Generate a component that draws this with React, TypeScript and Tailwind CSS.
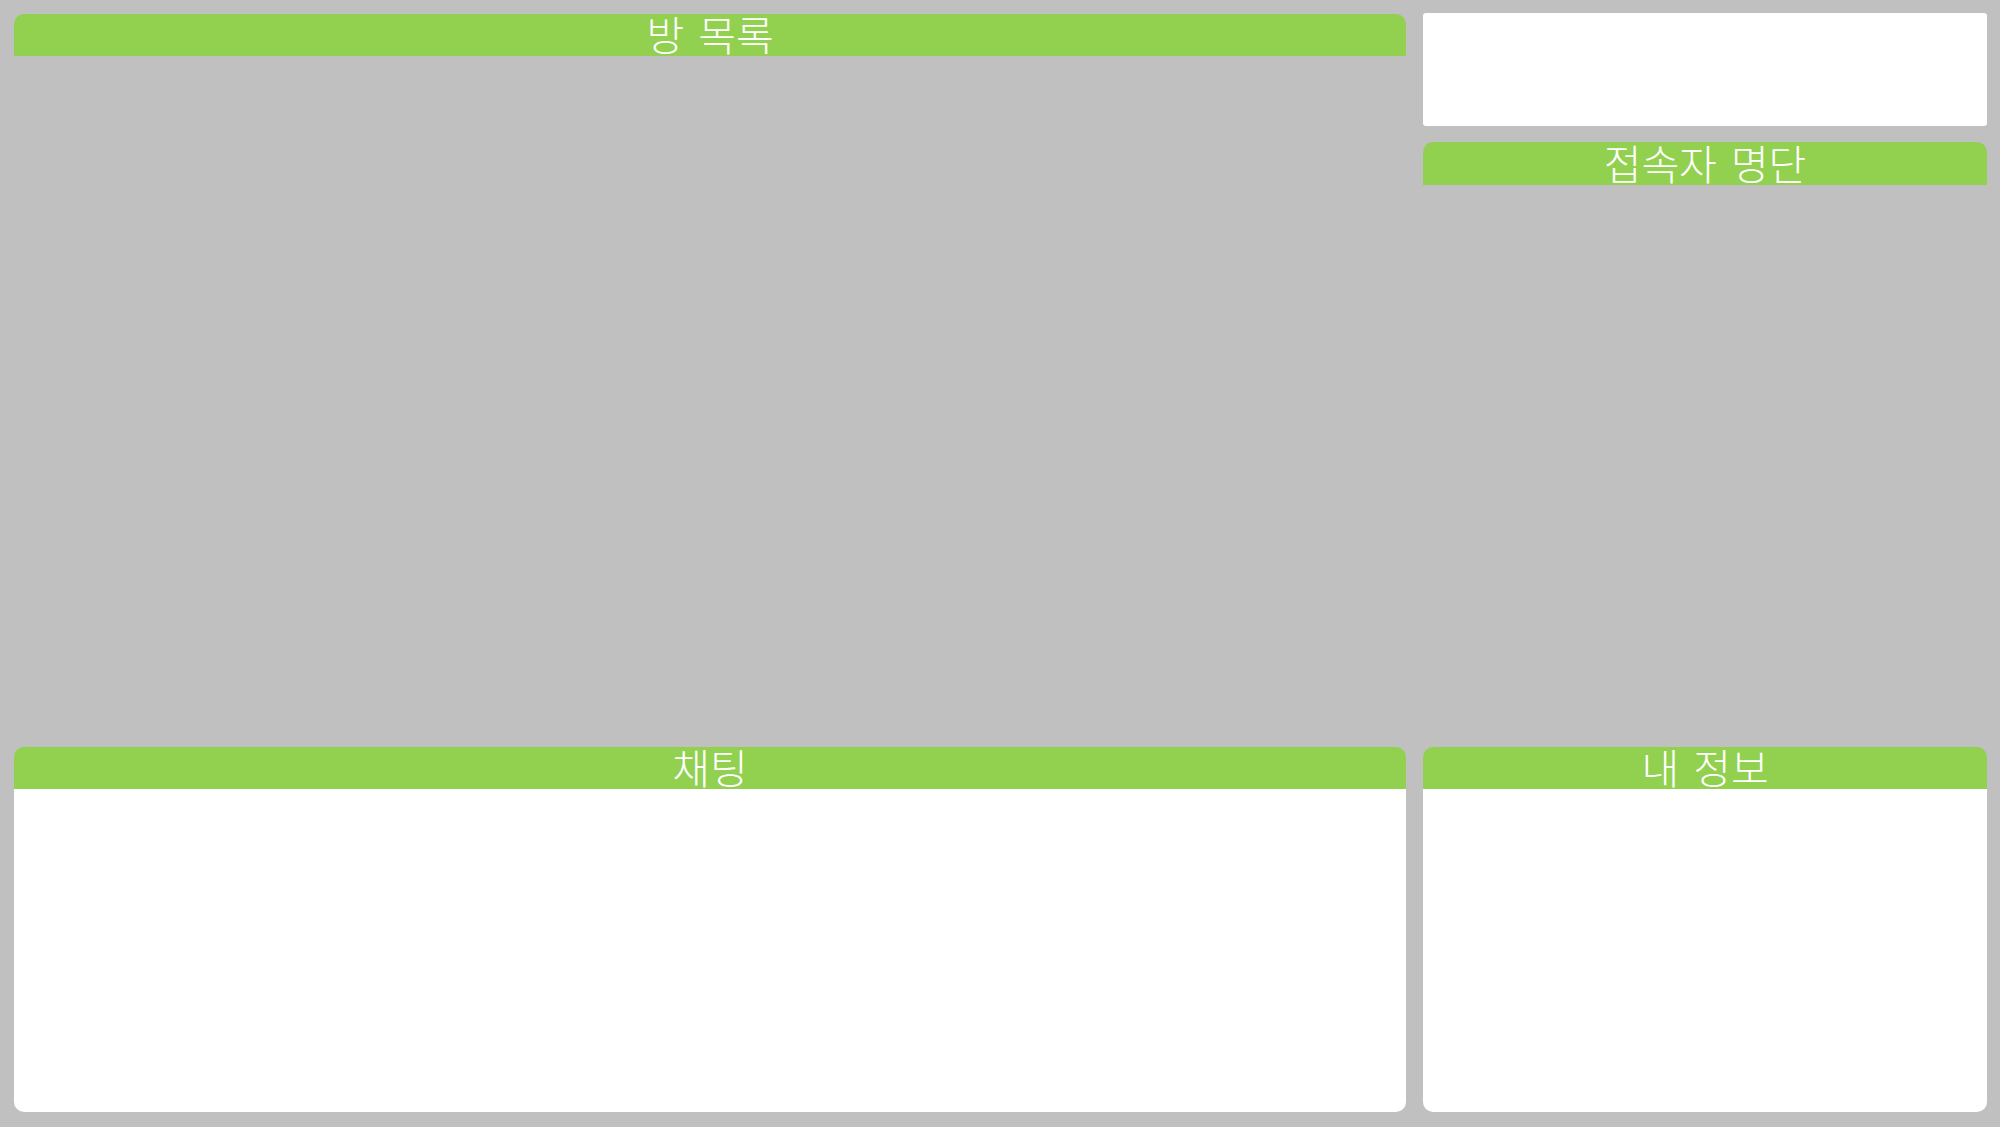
export default function App() {
  const title =
    "flex items-center justify-center bg-[#92d050] text-[41px] font-light leading-none text-white [word-spacing:5px]";
  return (
    <div
      className="grid h-[1127px] w-[2000px] grid-cols-[1392px_564px] grid-rows-[734px_365px] gap-x-[17px] bg-[#c0c0c0] pb-[15px] pl-[14px] pt-[13px]"
      style={{ fontFamily: '"Noto Sans CJK KR", "Noto Sans", sans-serif' }}
    >
      {/* 방 목록 */}
      <div className="pt-px">
        <div className={`h-[42px] rounded-t-[10px] ${title}`}>
          <span className="-mt-[3px]">방 목록</span>
        </div>
      </div>

      {/* right top */}
      <div className="flex flex-col">
        <div className="h-[113px] rounded-[3px] bg-white" />
        <div className={`mt-[16px] h-[43px] rounded-t-[10px] ${title}`}>
          <span className="-mt-[3px]">접속자 명단</span>
        </div>
      </div>

      {/* 채팅 */}
      <div className="flex flex-col">
        <div className={`h-[42px] rounded-t-[10px] ${title}`}>
          <span className="-mt-[3px]">채팅</span>
        </div>
        <div className="flex-1 rounded-b-[10px] bg-white" />
      </div>

      {/* 내 정보 */}
      <div className="flex flex-col">
        <div className={`h-[42px] rounded-t-[10px] ${title}`}>
          <span className="-mt-[3px]">내 정보</span>
        </div>
        <div className="flex-1 rounded-b-[10px] bg-white" />
      </div>
    </div>
  );
}
